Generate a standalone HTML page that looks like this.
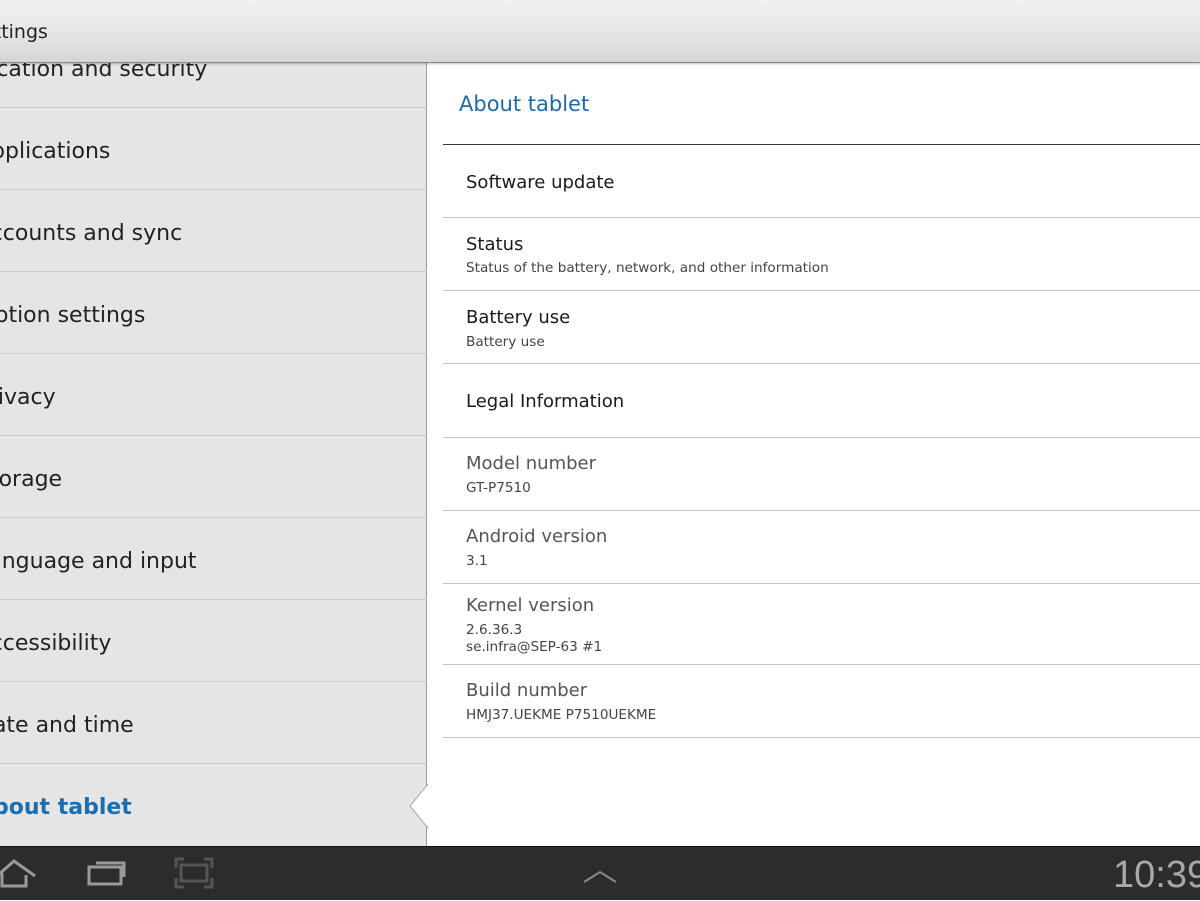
<!DOCTYPE html>
<html><head><style>
*{margin:0;padding:0;box-sizing:border-box}
body{width:1200px;height:900px;overflow:hidden;position:relative;background:#fff;font-family:"DejaVu Sans","Liberation Sans",sans-serif}
.top{position:absolute;left:0;top:0;width:1200px;height:63px;background:linear-gradient(#f1f1f1,#e4e4e4 60%,#d6d6d6);border-bottom:1px solid #8a8a8a;z-index:3;box-shadow:0 1px 2px rgba(0,0,0,.25)}
.top span{position:absolute;left:-30px;top:21px;font-size:19px;color:#222}
.left{position:absolute;left:0;top:63px;width:427px;height:783px;background:#e5e5e5;border-right:1px solid #9a9a9a}
.li{position:absolute;left:-24px;font-size:22px;color:#222;line-height:30px;white-space:nowrap;margin-top:2px}
.sep{position:absolute;left:0;width:427px;height:1px;background:#c9c9c9}
.t{position:absolute;left:466px;font-size:18px;color:#1a1a1a;line-height:22px;white-space:nowrap;margin-top:1px}
.g{color:#555}
.s{position:absolute;left:466px;font-size:13.6px;color:#444;line-height:17px;white-space:nowrap;margin-top:1px}
.rl{position:absolute;left:443px;width:757px;height:1px;background:#c4c4c4}
.bot{position:absolute;left:0;top:846px;width:1200px;height:54px;background:#2b2c2e;border-top:1px solid #111}
</style></head><body>
<div class="top"><span>Settings</span></div>
<div class="left">
<div class="li" style="top:-10px;left:-29px">Location and security</div>
<div class="sep" style="top:44px"></div>
<div class="li" style="top:72px">Applications</div>
<div class="sep" style="top:126px"></div>
<div class="li" style="top:154px">Accounts and sync</div>
<div class="sep" style="top:208px"></div>
<div class="li" style="top:236px">Motion settings</div>
<div class="sep" style="top:290px"></div>
<div class="li" style="top:318px">Privacy</div>
<div class="sep" style="top:372px"></div>
<div class="li" style="top:400px">Storage</div>
<div class="sep" style="top:454px"></div>
<div class="li" style="top:482px">Language and input</div>
<div class="sep" style="top:536px"></div>
<div class="li" style="top:564px">Accessibility</div>
<div class="sep" style="top:618px"></div>
<div class="li" style="top:646px">Date and time</div>
<div class="sep" style="top:700px"></div>
<div class="li" style="top:728px;color:#1b6fb0;font-weight:bold">About tablet</div>
</div>
<svg style="position:absolute;left:408px;top:784px" width="22" height="44"><polygon points="20,0 20,44 2,22" fill="#fff"/><polyline points="20,0 2,22 20,44" fill="none" stroke="#aaa" stroke-width="1"/></svg>
<div style="position:absolute;left:459px;top:92px;font-size:21px;color:#1c6aa6">About tablet</div>
<div class="rl" style="top:144px;background:#333"></div>
<div class="t" style="top:171px">Software update</div>
<div class="rl" style="top:217px"></div>
<div class="t" style="top:233px">Status</div>
<div class="s" style="top:259px">Status of the battery, network, and other information</div>
<div class="rl" style="top:290px"></div>
<div class="t" style="top:306px">Battery use</div>
<div class="s" style="top:333px">Battery use</div>
<div class="rl" style="top:363px"></div>
<div class="t" style="top:390px">Legal Information</div>
<div class="rl" style="top:437px"></div>
<div class="t g" style="top:452px">Model number</div>
<div class="s" style="top:479px">GT-P7510</div>
<div class="rl" style="top:510px"></div>
<div class="t g" style="top:525px">Android version</div>
<div class="s" style="top:552px">3.1</div>
<div class="rl" style="top:583px"></div>
<div class="t g" style="top:594px">Kernel version</div>
<div class="s" style="top:621px">2.6.36.3</div>
<div class="s" style="top:638px">se.infra@SEP-63 #1</div>
<div class="rl" style="top:664px"></div>
<div class="t g" style="top:679px">Build number</div>
<div class="s" style="top:706px">HMJ37.UEKME P7510UEKME</div>
<div class="rl" style="top:737px"></div>
<div class="bot">
<svg width="1200" height="54" style="position:absolute;left:0;top:0">
<g fill="none" stroke="#9a9a9a" stroke-width="3">
<polyline points="-2,28 14,14 35,29"/><polyline points="2,26 2,39 26,39 26,28"/>
<rect x="89" y="20" width="32" height="17"/><polyline points="96,16 124,16 124,30"/>
<g stroke="#555"><polyline points="176,21 176,12 184,12"/><polyline points="204,12 212,12 212,21"/><polyline points="176,31 176,40 184,40"/><polyline points="204,40 212,40 212,31"/><rect x="181" y="18" width="26" height="16"/></g>
<polyline points="584,35 600,25 616,35" stroke="#888" stroke-width="2"/>
</g>
<text x="1113" y="40" font-family="Liberation Sans,sans-serif" font-size="38" fill="#a8a8a8">10:39</text>
</svg>
</div>
</body></html>
